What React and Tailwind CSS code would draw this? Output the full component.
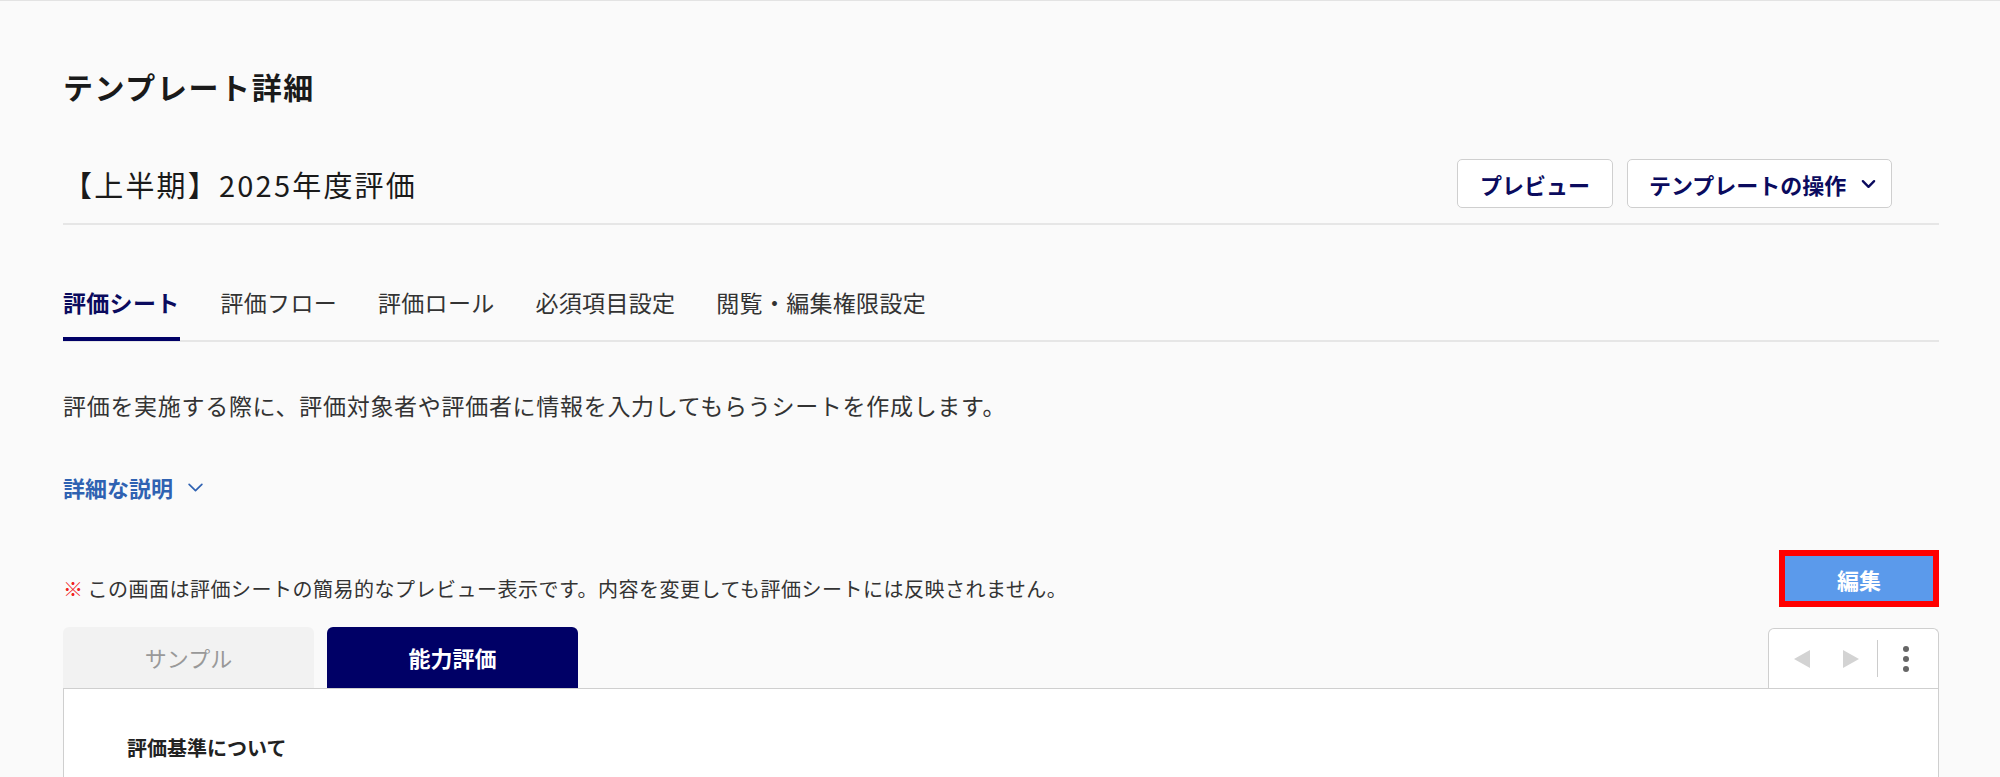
import React from 'react';

const tabs = ['評価シート', '評価フロー', '評価ロール', '必須項目設定', '閲覧・編集権限設定'];

const Chevron = ({ className, strokeWidth = 2 }) => (
  <svg viewBox="0 0 16 10" className={className} fill="none" stroke="currentColor" strokeWidth={strokeWidth} strokeLinecap="round" strokeLinejoin="round">
    <polyline points="2,2 8,8 14,2" />
  </svg>
);

const App = () => {
  return (
    <div className="min-h-screen bg-[#fafafa] border-t border-[#e3e3e3] font-['Noto_Sans_CJK_JP','Noto_Sans',sans-serif] text-[#222]">
      <div className="pl-[63px] pr-[61px]">
        <h1 className="mt-[65px] text-[30px] leading-[40px] font-bold tracking-[1.6px] text-[#1a1a1a]">テンプレート詳細</h1>

        {/* template name + actions */}
        <div className="mt-[53px] h-[49px] flex items-center justify-between">
          <div className="text-[29px] leading-[40px] tracking-[2.2px] text-[#1a1a1a]">【上半期】2025年度評価</div>
          <div className="flex items-center gap-[14px] mr-[47px]">
            <button className="h-[49px] w-[156px] bg-white border-[1.5px] border-[#cfcfcf] rounded-[5px] text-[22px] font-bold text-[#0b0b5e] leading-none">
              プレビュー
            </button>
            <button className="h-[49px] w-[265px] bg-white border-[1.5px] border-[#cfcfcf] rounded-[5px] flex items-center pl-[21px] text-[22px] font-bold text-[#0b0b5e] leading-none">
              <span>テンプレートの操作</span>
              <Chevron className="w-[15px] h-[10px] ml-[15px] text-[#0b0b5e]" strokeWidth={2.5} />
            </button>
          </div>
        </div>
        <div className="mt-[15px] h-[2px] bg-[#e6e6e6]" />

        {/* tabs */}
        <nav className="mt-[61px] flex gap-[41px] border-b-2 border-[#e6e6e6]">
          {tabs.map((tab, i) => (
            <div
              key={tab}
              className={`-mb-px pb-[19px] border-b-4 text-[23px] leading-[32px] tracking-[0.3px] ${
                i === 0 ? 'border-[#000066] font-bold text-[#0b0b5e]' : 'border-transparent text-[#333]'
              }`}
            >
              {tab}
            </div>
          ))}
        </nav>

        <p className="mt-[47px] text-[23px] leading-[32px] tracking-[0.7px] text-[#333]">
          評価を実施する際に、評価対象者や評価者に情報を入力してもらうシートを作成します。
        </p>

        <div className="mt-[50px] flex items-center text-[#2f62b2]">
          <span className="text-[22px] leading-[32px] font-bold">詳細な説明</span>
          <Chevron className="w-[17px] h-[11px] ml-[14px]" strokeWidth={1.6} />
        </div>

        {/* notice + edit */}
        <div className="mt-[47px] h-[57px] flex items-start justify-between">
          <p className="mt-[25px] text-[20px] leading-[28px] tracking-[0.5px] text-[#333]">
            <span className="text-[#f02020] mr-[4px]">※</span>
            この画面は評価シートの簡易的なプレビュー表示です。内容を変更しても評価シートには反映されません。
          </p>
          <div className="border-[6px] border-[#ff0000]">
            <button className="h-[45px] w-[148px] bg-[#5b9aeb] text-white text-[22px] font-bold leading-none">編集</button>
          </div>
        </div>

        {/* sheet tabs */}
        <div className="mt-[20px] flex items-end justify-between">
          <div className="flex gap-[13px]">
            <div className="h-[61px] w-[251px] rounded-t-[6px] bg-[#f2f2f2] flex items-center justify-center text-[22px] text-[#999]">
              サンプル
            </div>
            <div className="h-[61px] w-[251px] rounded-t-[6px] bg-[#000066] flex items-center justify-center text-[22px] font-bold text-white">
              能力評価
            </div>
          </div>
          <div className="h-[60px] w-[171px] bg-white border-[1.5px] border-b-0 border-[#cfcfcf] rounded-t-[6px] flex items-center pl-[25px]">
            <svg viewBox="0 0 16 18" className="w-[16px] h-[18px]">
              <polygon points="16,0 0,9 16,18" fill="#d3d3d3" />
            </svg>
            <svg viewBox="0 0 16 18" className="w-[16px] h-[18px] ml-[33px]">
              <polygon points="0,0 16,9 0,18" fill="#d3d3d3" />
            </svg>
            <div className="ml-[18px] w-px h-[37px] bg-[#cccccc]" />
            <div className="ml-[25px] flex flex-col gap-[4px]">
              <span className="w-[6px] h-[6px] rounded-full bg-[#666]" />
              <span className="w-[6px] h-[6px] rounded-full bg-[#666]" />
              <span className="w-[6px] h-[6px] rounded-full bg-[#666]" />
            </div>
          </div>
        </div>

        {/* sheet content */}
        <div className="min-h-[200px] bg-white border-[1.5px] border-[#cfcfcf] pl-[63px] pt-[45px]">
          <h2 className="text-[20px] leading-[28px] font-bold text-[#222]">評価基準について</h2>
        </div>
      </div>
    </div>
  );
};

export default App;
